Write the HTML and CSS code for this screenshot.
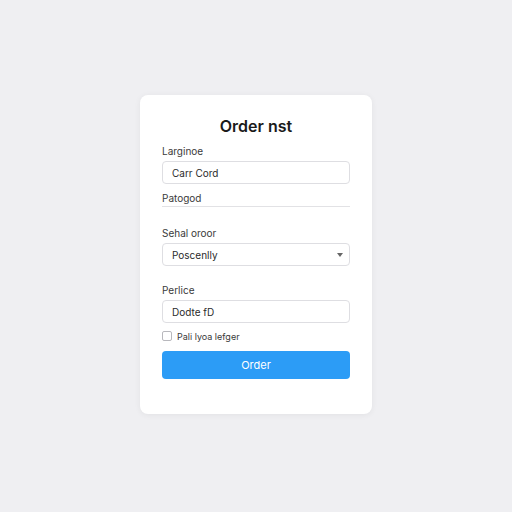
FILE: index.html
```html
<!DOCTYPE html>
<html>
<head>
    <title>Order</title>
    <meta charset="utf-8" />
    <link rel="stylesheet" href="styles.css">
</head>
<body>
    <div class="page">
        <form class="order-card">
            <h1 class="order-title">Order nst</h1>

            <label class="field-label">Larginoe</label>
            <input class="field-input" type="text" value="Carr Cord">

            <label class="field-label label-tight">Patogod</label>
            <div class="field-line"></div>

            <label class="field-label label-wide">Sehal oroor</label>
            <div class="field-select">
                <span>Poscenlly</span>
                <svg class="select-caret" width="6" height="4" viewBox="0 0 6 4"><path d="M0 0 L6 0 L3 4 Z" fill="#666"/></svg>
            </div>

            <label class="field-label label-wide">Perlice</label>
            <input class="field-input" type="text" value="Dodte fD">

            <div class="check-row">
                <span class="check-box"></span>
                <span>Pali lyoa lefger</span>
            </div>

            <button class="order-button" type="button">Order</button>
        </form>
    </div>
</body>
</html>
```

FILE: styles.css
```css
html, body {
    margin: 0;
    height: 100%;
    background-color: #efeff2;
    font-family: Inter, "Liberation Sans", Arial, sans-serif;
    color: #222;
}

.page {
    display: flex;
    justify-content: center;
    padding-top: 95px;
}

.order-card {
    width: 232px;
    box-sizing: border-box;
    padding: 21px 22px 35px;
    background-color: #ffffff;
    border-radius: 8px;
    box-shadow: 0 1px 6px rgba(0, 0, 0, 0.06);
    display: flex;
    flex-direction: column;
}

.order-title {
    margin: 0 0 8px;
    font-size: 16px;
    line-height: 20px;
    font-weight: 600;
    text-align: center;
    color: #1a1a1a;
}

.field-label {
    font-size: 10px;
    line-height: 14px;
    color: #3a3a3a;
    margin-bottom: 3px;
}

.label-tight {
    margin-top: 7px;
    margin-bottom: 1px;
}

.label-wide {
    margin-top: 19px;
}

.field-line {
    height: 1px;
    background-color: #e2e2e5;
}

.field-input,
.field-select {
    height: 23px;
    box-sizing: border-box;
    border: 1px solid #dedee2;
    border-radius: 4px;
    padding: 0 9px;
    font-family: inherit;
    font-size: 10px;
    color: #2a2a2a;
    background-color: #fff;
    outline: none;
}

.field-select {
    display: flex;
    align-items: center;
    justify-content: space-between;
    padding-right: 6px;
}

.field-select + .label-wide {
    margin-top: 17px;
}

.check-row {
    display: flex;
    align-items: center;
    gap: 5px;
    margin-top: 8px;
    font-size: 9px;
    color: #3a3a3a;
    height: 10px;
}

.check-box {
    width: 10px;
    height: 10px;
    box-sizing: border-box;
    border: 1px solid #b8b8bd;
    border-radius: 2px;
}

.order-button {
    margin-top: 10px;
    height: 28px;
    border: none;
    border-radius: 4px;
    background-color: #2c9cf6;
    color: #fff;
    font-family: inherit;
    font-size: 11px;
    cursor: pointer;
}
```
